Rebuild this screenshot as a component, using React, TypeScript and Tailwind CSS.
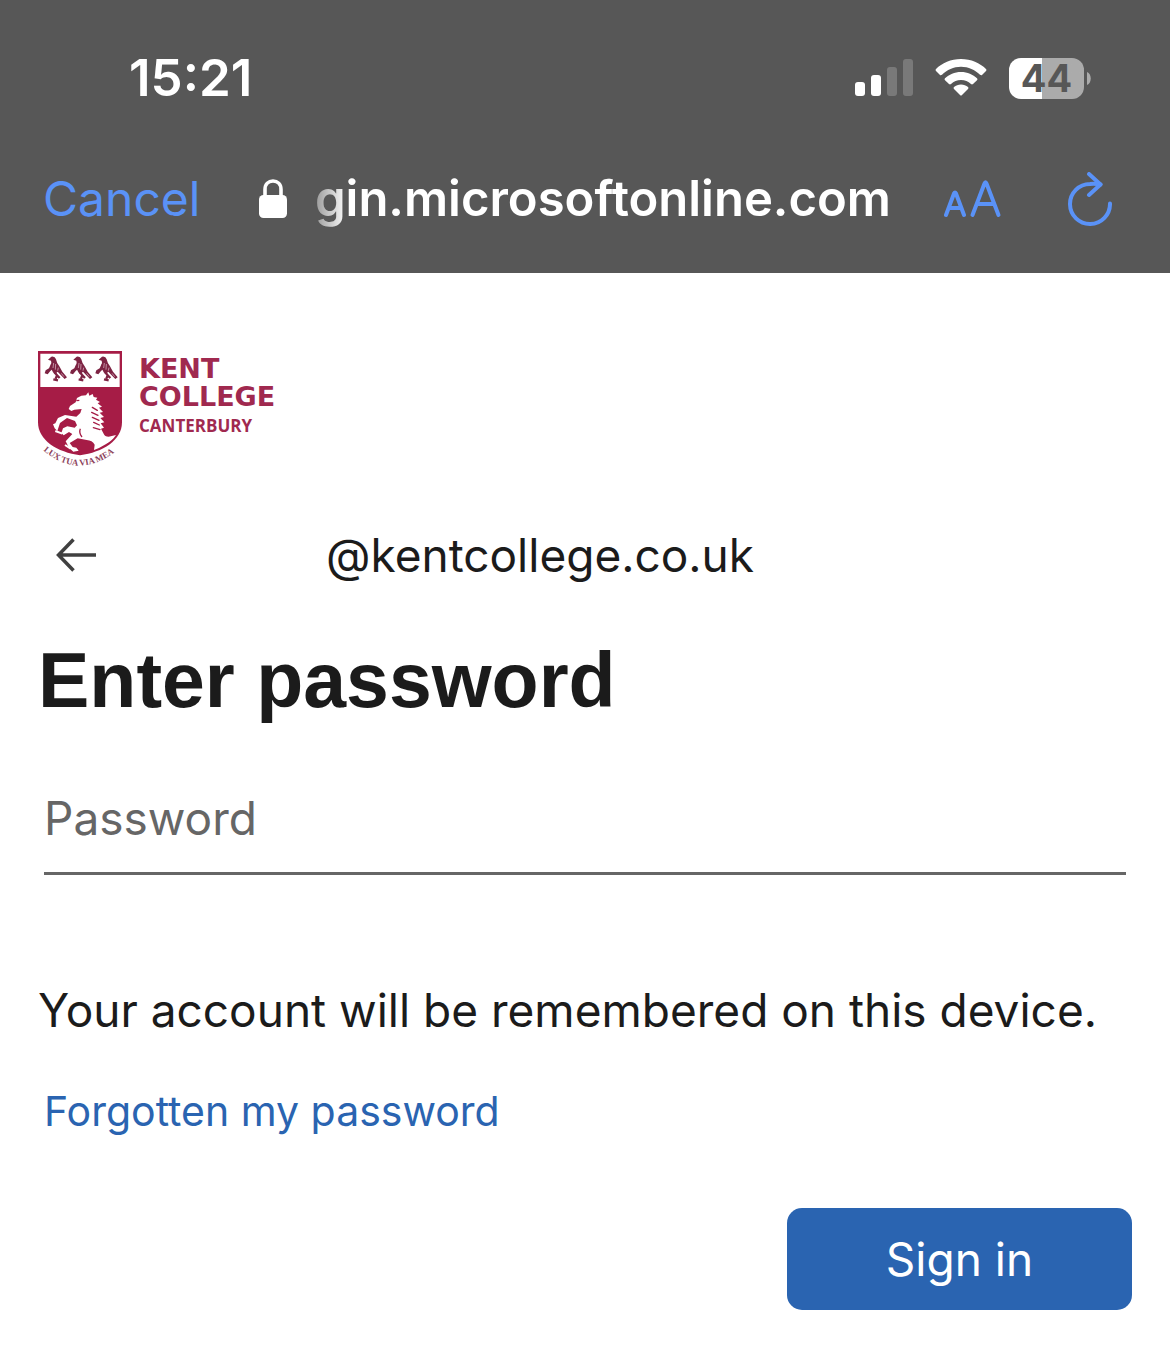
import { useState } from "react";

function SignalIcon() {
  return (
    <svg width="58" height="38" viewBox="0 0 58 38" aria-hidden="true">
      <rect x="0" y="23" width="10" height="14" rx="3" fill="#fff" />
      <rect x="16" y="16" width="10" height="21" rx="3" fill="#fff" />
      <rect x="32" y="8" width="10" height="29" rx="3" fill="#797979" />
      <rect x="48" y="0" width="10" height="37" rx="3" fill="#797979" />
    </svg>
  );
}

function WifiIcon() {
  return (
    <svg width="52" height="38" viewBox="0 0 52 38" fill="#fff" aria-hidden="true">
      <path d="M26 0C16 0 7 4 1 10Q0 11 1 12L5 16Q6 16.500 7 15.700C12 10.700 18.500 7.700 26 7.700S40 10.700 45 15.700Q46 16.500 47 16L51 12Q52 11 51 10C45 4 36 0 26 0Z" />
      <path d="M26 13C19.500 13 14 15.500 10 19.300Q9 20.200 10 21.200L14 25Q15 25.800 16 25C18.800 22.400 22 20.900 26 20.900S33.200 22.400 36 25Q37 25.800 38 25L42 21.200Q43 20.200 42 19.300C38 15.500 32.500 13 26 13Z" />
      <path d="M26 25.500C23.300 25.500 20.800 26.500 19 28Q18 29 19 30L25 36Q26 37 27 36L33 30Q34 29 33 28C31.200 26.500 28.700 25.500 26 25.500Z" />
    </svg>
  );
}

function Battery() {
  return (
    <div className="flex items-center gap-[3px]">
      <div className="flex h-[41px] w-[75px] items-center justify-center rounded-[12px] bg-linear-to-r from-white from-44% to-[#ababab] to-44% text-[38px] leading-[40px] font-bold text-[#575757]">
        44
      </div>
      <svg width="4" height="13" viewBox="0 0 4 13" aria-hidden="true">
        <path d="M0 0C5 2 5 11 0 13Z" fill="#ababab" />
      </svg>
    </div>
  );
}

function LockIcon() {
  return (
    <svg width="28" height="40" viewBox="0 0 28 40" aria-hidden="true">
      <path
        d="M6 18V10.500C6 5 9.500 2 14 2S22 5 22 10.500V18"
        fill="none"
        stroke="#fff"
        strokeWidth="3.600"
      />
      <rect x="0" y="16" width="28" height="23" rx="4.500" fill="#fff" />
    </svg>
  );
}

function TextSizeIcon() {
  return (
    <svg
      width="58"
      height="38"
      viewBox="0 0 58 38"
      fill="none"
      stroke="#5a92f7"
      strokeWidth="4"
      strokeLinecap="round"
      strokeLinejoin="round"
      aria-hidden="true"
    >
      <path d="M2 35L10 13.500Q11 11.500 12 13.500L20 35M5 28H17" />
      <path d="M28.500 35L40.500 3.500Q41.500 1 42.500 3.500L54.500 35M33 24H50" />
    </svg>
  );
}

function ReloadIcon() {
  return (
    <svg
      width="44"
      height="54"
      viewBox="0 0 44 54"
      fill="none"
      stroke="#5a92f7"
      strokeWidth="4"
      strokeLinecap="round"
      strokeLinejoin="round"
      aria-hidden="true"
    >
      <path d="M42 31.500A20 20 0 1 1 22 12Q27 11.500 32.500 12.500" />
      <path d="M21 2L32.500 12.500L21 23" />
    </svg>
  );
}

function BackIcon() {
  return (
    <svg
      width="40"
      height="34"
      viewBox="0 0 40 34"
      fill="none"
      stroke="#404040"
      strokeWidth="3.500"
      aria-hidden="true"
    >
      <path d="M17.500 1.500L2.500 17L17.500 32.500M2.500 17H40" />
    </svg>
  );
}

function Bird({ x }: { x: number }) {
  return (
    <g transform={`translate(${x} 0)`} fill="#7d2343">
      <path d="M10 44L20 35Q31 33 34 43Q36 54 44 64L53 80L67 97L60 102L46 88L39 80L30 88L25 82L17 66L20 53L19 47Z" />
      <path d="M19 56L13 70L3 76L0 85L9 88L17 78L24 72Z" />
      <path
        d="M30 82L37 91L33 101M26 103L40 106M37 91L45 99"
        fill="none"
        stroke="#7d2343"
        strokeWidth="7"
      />
      <path
        d="M27 54L25 69M33 57L32 74M41 68L39 77M50 85L58 95"
        stroke="#e6c3d0"
        strokeWidth="2"
      />
    </g>
  );
}

function Crest() {
  return (
    <svg width="84" height="116" viewBox="24 18 252 348" role="img" aria-label="Kent College crest">
      <path d="M24 18H276V232C276 286 218 322 150 331C82 322 24 286 24 232Z" fill="#a61c46" />
      <path d="M31 26H269V126H31Z" fill="#fff" />
      <Bird x={44} />
      <Bird x={120} />
      <Bird x={196} />
      {/* horse */}
      <path
        d="M141 159L154 152L168 151L175 142L178 152L188 147L191 156L202 158L198 164L210 171L203 175L216 185L207 188L219 201L209 203L222 216L211 219L223 232L212 235L222 248L213 251L221 266Q224 275 236 275L258 270Q247 287 227 298L207 309L192 315L194 299Q187 286 170 285L143 280L119 294L128 306L139 308L146 317L130 320L117 308L107 289L127 267L117 261L101 271L94 264L99 250L112 244L134 248L141 241L135 228L111 219L90 234L82 258L74 250L69 238L76 235L84 219L105 210L139 215L151 204L155 192L133 194L124 198L116 192L120 183L137 172Z"
        fill="#fff"
      />
      <path
        d="M187 187L202 196M185 202L204 211M187 217L207 226M191 232L208 240M190 248L210 254"
        stroke="#a61c46"
        strokeWidth="4"
        strokeLinecap="round"
      />
      <path d="M139 167L148 166M156 276Q146 263 151 251" stroke="#a61c46" strokeWidth="4" fill="none" />
      <path d="M76 258L97 266M105 300L122 311" stroke="#fff" strokeWidth="6" />
      <path id="motto" d="M40 316Q148 408 264 314" fill="none" />
      <text className="[font-family:'Liberation_Serif',serif] text-[26px] font-bold" fill="#8b4059">
        <textPath href="#motto">LUX TUA VIA MEA</textPath>
      </text>
    </svg>
  );
}

export default function App() {
  const [password, setPassword] = useState("");

  return (
    <div className="min-h-screen bg-white text-[#1b1b1b] [font-family:Inter,sans-serif]">
      <header className="bg-[#575757] pb-[31px] text-white">
        <div className="flex h-[156px] items-center justify-between pr-[79px] pl-[129px]">
          <span className="text-[51px] font-semibold">15:21</span>
          <div className="flex items-center gap-[22px]">
            <SignalIcon />
            <WifiIcon />
            <Battery />
          </div>
        </div>

        <div className="flex h-[86px] items-center pr-[58px] pl-[43px]">
          <button type="button" className="text-[48px] text-[#5a92f7]">
            Cancel
          </button>
          <div className="ml-auto flex items-center gap-7">
            <LockIcon />
            <span className="text-[49px] font-semibold [mask-image:linear-gradient(to_right,#0006,black_32px)]">
              gin.microsoftonline.com
            </span>
          </div>
          <button type="button" aria-label="Text size" className="ml-[53px]">
            <TextSizeIcon />
          </button>
          <button type="button" aria-label="Reload" className="ml-[66px]">
            <ReloadIcon />
          </button>
        </div>
      </header>

      <main className="px-[38px] pt-[78px] pb-[47px]">
        <div className="flex gap-[17px] text-[#a0294f]">
          <Crest />
          <div className="pt-1 [font-family:'DejaVu_Sans',sans-serif] font-bold">
            <div className="text-[27px] leading-[28px]">KENT</div>
            <div className="text-[27px] leading-[28px]">COLLEGE</div>
            <div className="mt-[2px] [font-family:'Open_Sans',sans-serif] text-[17px] leading-[26px]">
              CANTERBURY
            </div>
          </div>
        </div>

        <div className="mt-[52px] flex h-[72px] items-center pl-[18px]">
          <button type="button" aria-label="Back">
            <BackIcon />
          </button>
          <span className="ml-[230px] text-[46px]">@kentcollege.co.uk</span>
        </div>

        <form onSubmit={(e) => e.preventDefault()}>
          <h1 className="mt-[41px] text-[77px] leading-[96px] font-bold [font-family:'Liberation_Sans',sans-serif]">
            Enter password
          </h1>

          <div className="mx-[6px] mt-8">
            <input
              type="password"
              aria-label="Password"
              placeholder="Password"
              value={password}
              onChange={(e) => setPassword(e.target.value)}
              className="block h-[115px] w-full border-b-3 border-[#666666] pt-[3px] text-[46px] outline-none placeholder:text-[#666666]"
            />
          </div>

          <p className="mt-[99px] text-[46px] leading-[72px]">
            Your account will be remembered on this device.
          </p>

          <a href="#" className="mt-[33px] ml-[6px] inline-block text-[41px] leading-[64px] text-[#2a64b1]">
            Forgotten my password
          </a>

          <div className="mt-[65px] flex justify-end">
            <button
              type="submit"
              className="h-[102px] w-[345px] rounded-[15px] bg-[#2a64b1] text-[46px] text-white"
            >
              Sign in
            </button>
          </div>
        </form>
      </main>
    </div>
  );
}
